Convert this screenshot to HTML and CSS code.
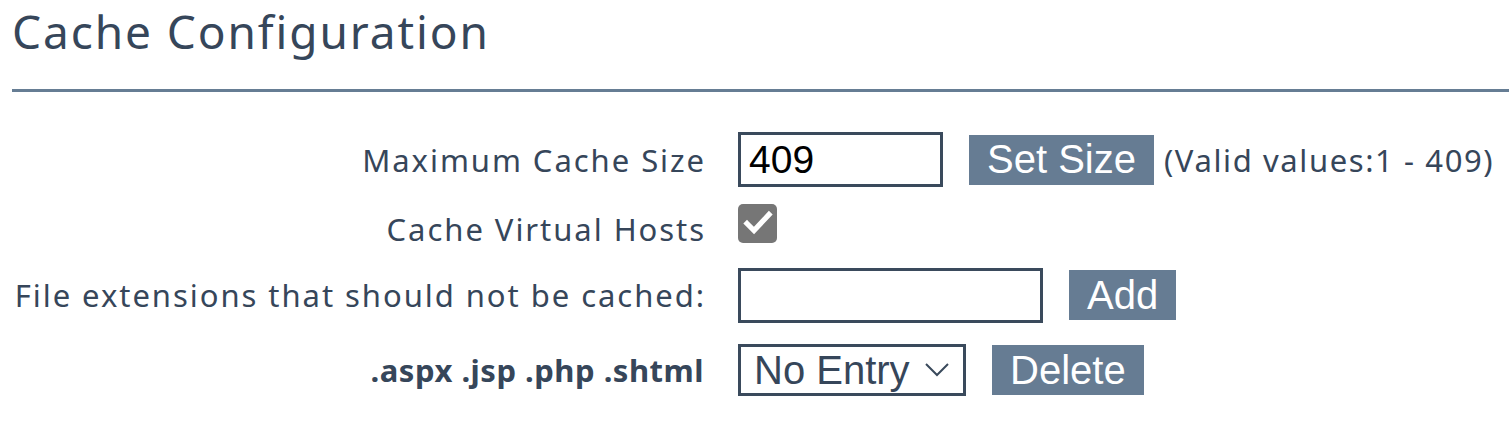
FILE: index.html
```html
<!DOCTYPE html>
<html lang="en">
<head>
    <meta charset="UTF-8">
    <meta name="viewport" content="width=device-width, initial-scale=1.0">
    <title>Cache Configuration</title>
    <link rel="stylesheet" href="styles.css">
</head>
<body>
    <div class="page">
        <h1 class="page-title">Cache Configuration</h1>
        <hr class="divider">

        <div class="form-table">
            <div class="form-row row-size">
                <label class="field-label" for="cache-size">Maximum Cache Size</label>
                <div class="field">
                    <input class="text-input input-size" id="cache-size" type="text" value="409">
                    <button class="btn">Set Size</button>
                    <span class="hint">(Valid values:1 - 409)</span>
                </div>
            </div>

            <div class="form-row row-hosts">
                <span class="field-label">Cache Virtual Hosts</span>
                <div class="field">
                    <!-- checked box, drawn so the grey colour matches -->
                    <span class="checkbox">
                        <svg viewBox="0 0 30 30" width="30" height="30">
                            <path d="M4 15.5 L11 22.5 L26 6.5" fill="none" stroke="#fff" stroke-width="5.2" stroke-linecap="square"/>
                        </svg>
                    </span>
                </div>
            </div>

            <div class="form-row row-ext">
                <label class="field-label" for="ext">File extensions that should not be cached:</label>
                <div class="field">
                    <input class="text-input input-ext" id="ext" type="text">
                    <button class="btn">Add</button>
                </div>
            </div>

            <div class="form-row row-list">
                <span class="field-label bold">.aspx .jsp .php .shtml</span>
                <div class="field">
                    <div class="select-box">
                        <span>No Entry</span>
                        <svg viewBox="0 0 24 14" width="24" height="14">
                            <path d="M1 1 L12 12 L23 1" fill="none" stroke="#3a4a5c" stroke-width="2"/>
                        </svg>
                    </div>
                    <button class="btn">Delete</button>
                </div>
            </div>
        </div>
    </div>
</body>
</html>
```

FILE: styles.css
```css
* {
    margin: 0;
    padding: 0;
    box-sizing: border-box;
}

body, html {
    background: #fff;
    font-family: "Noto Sans", "Open Sans", sans-serif;
    color: #36465a;
}

.page {
    padding: 0 0 0 12px;
}

.page-title {
    font-size: 46px;
    font-weight: normal;
    line-height: 62px;
    letter-spacing: 1.9px;
}

.divider {
    border: none;
    height: 3px;
    background: #667d94;
    margin-top: 27px;
}

.form-table {
    margin-top: 36px;
}

.form-row {
    display: grid;
    grid-template-columns: 692px 1fr;
    column-gap: 34px;
    align-items: center;
}

.row-size {
    height: 63px;
}

.row-hosts {
    height: 70px;
}

.row-hosts .field-label {
    padding-top: 5px;
}

.row-ext {
    height: 68px;
}

.row-list {
    height: 82px;
}

.field-label {
    text-align: right;
    font-size: 31px;
    letter-spacing: 1.95px;
    margin-right: -2px;
    white-space: nowrap;
}

.field-label.bold {
    font-weight: bold;
    letter-spacing: 0.5px;
    margin-right: 0;
}

.field {
    display: flex;
    align-items: center;
}

.text-input {
    height: 55px;
    border: 3px solid #3a4a5c;
    font-family: "Liberation Sans", Arial, sans-serif;
    font-size: 39px;
    color: #000;
    padding: 0 8px;
    outline: none;
}

.input-size {
    width: 205px;
}

.input-ext {
    width: 305px;
}

.btn {
    background-color: #667c93;
    color: #fff;
    border: none;
    font-family: "Liberation Sans", Arial, sans-serif;
    font-size: 40px;
    height: 50px;
    padding: 0 18px;
    margin-left: 26px;
    cursor: pointer;
}

.hint {
    font-size: 31px;
    letter-spacing: 1.6px;
    margin-left: 10px;
}

.checkbox {
    width: 39px;
    height: 39px;
    border-radius: 5px;
    background: #767676;
    display: flex;
    justify-content: center;
    align-items: center;
    margin-top: -6px;
}

.select-box {
    width: 228px;
    height: 52px;
    border: 3px solid #3a4a5c;
    font-family: "Liberation Sans", Arial, sans-serif;
    font-size: 40px;
    color: #36465a;
    display: flex;
    align-items: center;
    justify-content: space-between;
    padding: 0 14px 0 13px;
}
```
